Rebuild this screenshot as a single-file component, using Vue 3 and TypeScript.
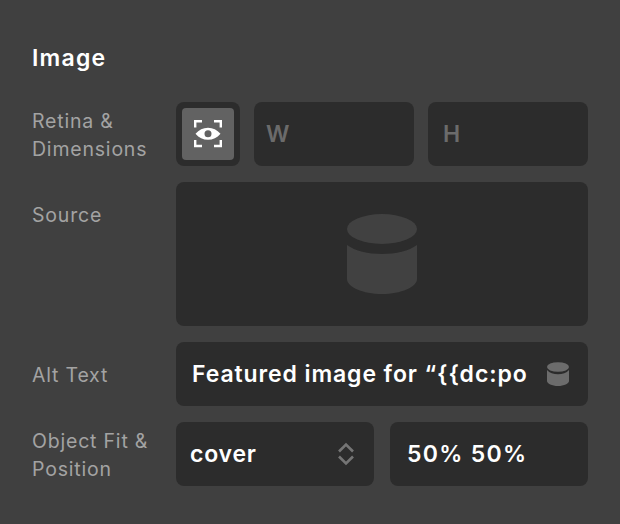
<script setup lang="ts">
const altText = 'Featured image for “{{dc:po'
</script>

<template>
  <div class="panel">
    <h2 class="title">Image</h2>
    <div class="rows">
      <div class="row">
        <div class="label">Retina &amp;<br />Dimensions</div>
        <div class="dims">
          <div class="toggle">
            <div class="toggle-on">
              <svg width="32" height="28" viewBox="0 0 32 28" fill="none">
                <path d="M3.200 7.500V1.200H10M22 1.200H28.800V7.500M3.200 20V26H10M22 26H28.800V20" stroke="#fff" stroke-width="2.400" />
                <path fill-rule="evenodd" d="M3.500 13.800C7 9.800 11 7.800 16 7.800S25 9.800 28.500 13.800C25 17.800 21 19.800 16 19.800S7 17.800 3.500 13.800ZM16 10.300a3.500 3.500 0 1 0 0 7 3.500 3.500 0 0 0 0-7Z" fill="#fff" />
              </svg>
            </div>
          </div>
          <div class="field placeholder width-field">W</div>
          <div class="field placeholder height-field">H</div>
        </div>
      </div>
      <div class="row">
        <div class="label single">Source</div>
        <div class="source">
          <svg width="70" height="80" viewBox="0 0 70 80">
            <ellipse cx="35" cy="15" rx="35" ry="15" fill="#414141" />
            <path d="M0 31C8 37 21 40 35 40S62 37 70 31V65C70 73 54 80 35 80S0 73 0 65Z" fill="#414141" />
          </svg>
        </div>
      </div>
      <div class="row">
        <div class="label single">Alt Text</div>
        <div class="field alt-field">
          <span class="alt-text">{{ altText }}</span>
          <svg class="alt-icon" width="22" height="24" viewBox="0 0 22 24">
            <ellipse cx="11" cy="5" rx="11" ry="4.800" fill="#6c6c6c" />
            <path d="M0 8C2.500 11 6.500 12.300 11 12.300S19.500 11 22 8V19C22 21.500 17 24 11 24S0 21.500 0 19Z" fill="#6c6c6c" />
          </svg>
        </div>
      </div>
      <div class="row">
        <div class="label">Object Fit &amp;<br />Position</div>
        <div class="fit">
          <div class="field select">
            <span>cover</span>
            <svg width="18" height="24" viewBox="0 0 18 24" fill="none">
              <path d="M2 9.500L9 2.500L16 9.500M2 14.500L9 21.500L16 14.500" stroke="#757575" stroke-width="2.600" />
            </svg>
          </div>
          <div class="field position">50% 50%</div>
        </div>
      </div>
    </div>
  </div>
</template>

<style>
html, body { margin: 0; background: #404040; }
</style>

<style scoped>
.panel {
  box-sizing: border-box;
  width: 620px;
  height: 524px;
  padding: 42px 32px 0;
  background: #404040;
  font-family: Inter, "Liberation Sans", sans-serif;
}
.title {
  margin: 0 0 28px;
  font-size: 23px;
  line-height: 32px;
  font-weight: 600;
  letter-spacing: 1.200px;
  color: #fff;
}
.rows { display: flex; flex-direction: column; gap: 16px; }
.row { display: grid; grid-template-columns: 144px 412px; }
.label {
  font-size: 19.500px;
  line-height: 28px;
  letter-spacing: 0.800px;
  color: #a3a3a3;
  padding-top: 5px;
}
.label.single { padding-top: 19px; }
.dims { display: grid; grid-template-columns: 64px 160px 160px; gap: 14px; }
.toggle {
  background: #2c2c2c;
  border-radius: 8px;
  padding: 6px;
  height: 64px;
  box-sizing: border-box;
}
.toggle-on {
  width: 52px;
  height: 52px;
  background: #626262;
  border-radius: 4px;
  display: flex;
  align-items: center;
  justify-content: center;
}
.field {
  height: 64px;
  box-sizing: border-box;
  background: #2c2c2c;
  border-radius: 8px;
  display: flex;
  align-items: center;
  font-size: 23px;
  font-weight: 600;
  color: #fff;
}
.placeholder { color: #6b6b6b; }
.width-field { padding-left: 12px; }
.height-field { padding-left: 15px; }
.source {
  height: 144px;
  background: #2c2c2c;
  border-radius: 8px;
  display: flex;
  align-items: center;
  justify-content: center;
}
.alt-field { padding: 0 19px 0 16px; letter-spacing: 0.900px; }
.alt-text {
  flex: 1;
  min-width: 0;
  white-space: nowrap;
}
.alt-icon { flex: none; }
.fit { display: grid; grid-template-columns: 198px 198px; gap: 16px; }
.select { justify-content: space-between; padding: 0 19px 0 14px; letter-spacing: 0.800px; }
.position { padding-left: 17px; letter-spacing: 1.300px; }
</style>
